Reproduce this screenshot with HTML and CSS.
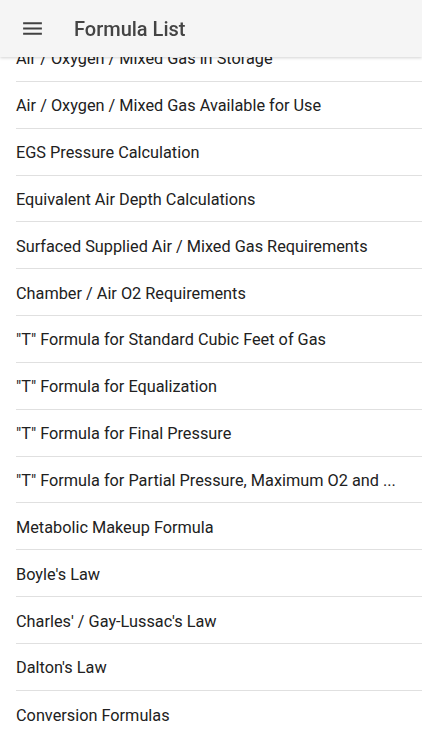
FILE: index.html
```html
<!DOCTYPE html>
<html lang="en">
<head>
  <meta charset="UTF-8" />
  <meta name="viewport" content="width=device-width, initial-scale=1.0"/>
  <title>Formula List</title>
  <link rel="stylesheet" href="styles.css">
</head>
<body>

  <header class="app-bar">
    <button class="menu-btn" aria-label="Menu">
      <svg viewBox="0 0 24 24" width="25" height="25">
        <path d="M3 18h18v-2H3v2zm0-5h18v-2H3v2zm0-7v2h18V6H3z" fill="#424242"/>
      </svg>
    </button>
    <h1 class="app-title">Formula List</h1>
  </header>

  <ul class="formula-list">
    <li>Air / Oxygen / Mixed Gas in Storage</li>
    <li>Air / Oxygen / Mixed Gas Available for Use</li>
    <li>EGS Pressure Calculation</li>
    <li>Equivalent Air Depth Calculations</li>
    <li>Surfaced Supplied Air / Mixed Gas Requirements</li>
    <li>Chamber / Air O2 Requirements</li>
    <li>"T" Formula for Standard Cubic Feet of Gas</li>
    <li>"T" Formula for Equalization</li>
    <li>"T" Formula for Final Pressure</li>
    <li>"T" Formula for Partial Pressure, Maximum O2 and ...</li>
    <li>Metabolic Makeup Formula</li>
    <li>Boyle's Law</li>
    <li>Charles' / Gay-Lussac's Law</li>
    <li>Dalton's Law</li>
    <li>Conversion Formulas</li>
  </ul>

</body>
</html>
```

FILE: styles.css
```css
body {
  margin: 0;
  font-family: Roboto, "Noto Sans", Arial, sans-serif;
  background: #fff;
  overflow: hidden;
}

.app-bar {
  position: fixed;
  top: 0;
  left: 0;
  right: 0;
  height: 57px;
  background: #f5f5f5;
  display: flex;
  align-items: center;
  box-shadow: 0 1px 3px rgba(0,0,0,0.18);
  z-index: 2;
}

.menu-btn {
  border: none;
  background: none;
  padding: 0;
  margin-left: 20px;
  width: 25px;
  height: 25px;
  display: flex;
}

.app-title {
  margin: 0 0 0 29px;
  font-size: 20px;
  font-weight: 500;
  color: #444;
}

.formula-list {
  list-style: none;
  margin: 0;
  padding: 35px 0 0 16px;
}

.formula-list li {
  box-sizing: border-box;
  height: 46.85px;
  padding-top: 2px;
  display: flex;
  align-items: center;
  font-size: 16.3px;
  color: #212121;
  border-bottom: 1px solid #e0e0e0;
  white-space: nowrap;
}

.formula-list li:last-child {
  border-bottom: none;
}
```
